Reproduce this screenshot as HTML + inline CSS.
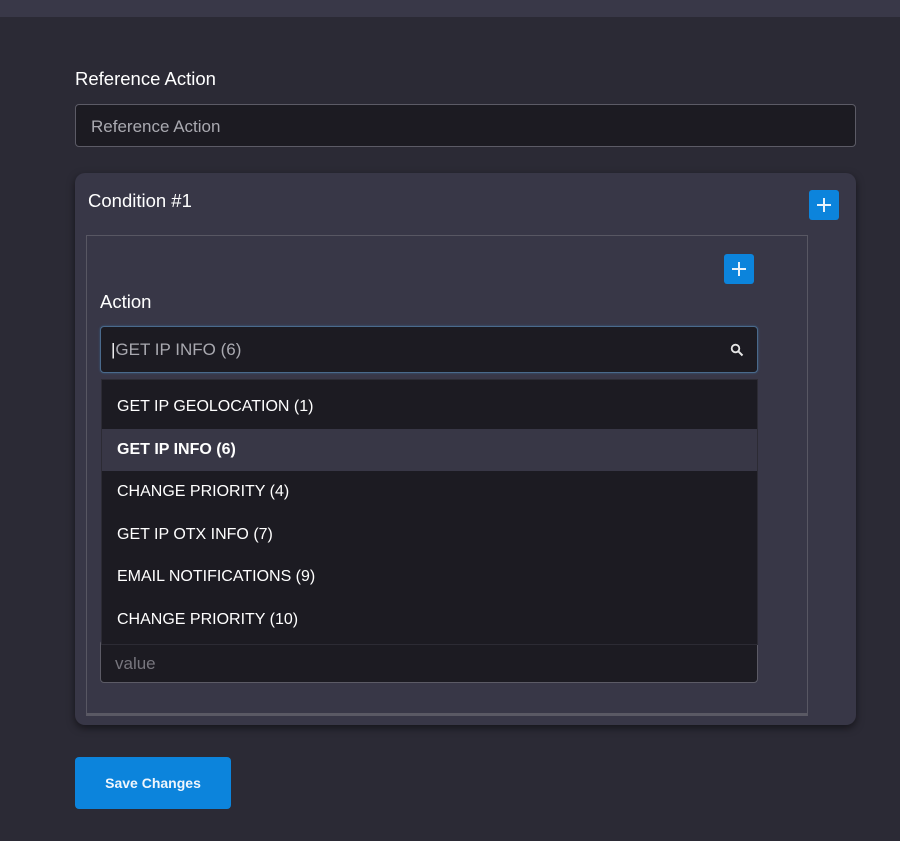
<!DOCTYPE html>
<html><head><style>
*{box-sizing:border-box;margin:0;padding:0}
body{width:900px;height:841px;background:#2b2a35;font-family:"Liberation Sans",sans-serif;position:relative;overflow:hidden;color:#fff}
.top{position:absolute;left:0;top:0;width:900px;height:17px;background:#393848}
.abs{position:absolute}
.lbl{font-size:18.5px;color:#fff}
.inp{background:#1c1b22;border:1px solid #5c5b66;border-radius:4px;color:#a9a9b0;font-size:17px}
.plus{position:absolute;width:30px;height:30px;background:#0c84dc;border-radius:3px}
.plus:before{content:"";position:absolute;left:8px;top:14px;width:14px;height:2px;background:#e8f2fb}
.plus:after{content:"";position:absolute;left:14px;top:8px;width:2px;height:14px;background:#e8f2fb}
.item{height:42.5px;line-height:42.5px;padding-left:15px;font-size:16px;color:#fff}
</style></head><body>
<div class="top"></div>
<div class="abs lbl" style="left:75px;top:68px">Reference Action</div>
<div class="abs inp" style="left:75px;top:104px;width:781px;height:43px;line-height:43px;padding-left:15px">Reference Action</div>
<div class="abs" style="left:75px;top:173px;width:781px;height:552px;background:#383747;border-radius:10px;box-shadow:0 3px 8px rgba(0,0,0,.5)"></div>
<div class="abs lbl" style="left:88px;top:190px">Condition #1</div>
<div class="plus" style="left:809px;top:190px"></div>
<div class="abs" style="left:86px;top:235px;width:722px;height:481px;border:1px solid #585763;border-bottom:3px solid #5a5964"></div>
<div class="plus" style="left:724px;top:254px"></div>
<div class="abs lbl" style="left:100px;top:291px">Action</div>
<div class="abs inp" style="left:100px;top:326px;width:658px;height:47px;line-height:45px;padding-left:10px;border:1px solid #4a6a8c;box-shadow:0 0 2px #3b5c80"><span style="color:#fff">|</span>GET IP INFO (6)
<svg style="position:absolute;right:13px;top:16px" width="14" height="14" viewBox="0 0 14 14"><circle cx="5.5" cy="5.5" r="3.8" fill="none" stroke="#e6e6e6" stroke-width="1.8"/><path d="M8.3 8.3L12.5 12.5" stroke="#e6e6e6" stroke-width="2"/></svg></div>
<div class="abs inp" style="left:100px;top:640px;width:658px;height:43px;line-height:46px;padding-left:14px;color:#77767e">value</div>
<div class="abs" style="left:101px;top:379px;width:657px;height:266px;background:#1c1b22;border:1px solid #2c2b34;padding-top:6px">
<div class="item">GET IP GEOLOCATION (1)</div>
<div class="item" style="background:#383746;font-weight:bold">GET IP INFO (6)</div>
<div class="item">CHANGE PRIORITY (4)</div>
<div class="item">GET IP OTX INFO (7)</div>
<div class="item">EMAIL NOTIFICATIONS (9)</div>
<div class="item">CHANGE PRIORITY (10)</div>
</div>
<div class="abs" style="left:75px;top:757px;width:156px;height:52px;background:#0c84dc;border-radius:4px;line-height:52px;text-align:center;font-size:14px;font-weight:bold;color:#f0f6fc">Save Changes</div>
</body></html>
